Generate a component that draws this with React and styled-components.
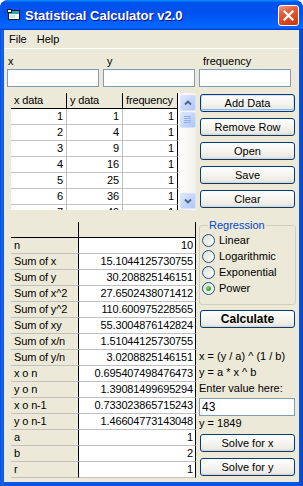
import React from 'react';
import styled, { createGlobalStyle } from 'styled-components';

const Global = createGlobalStyle`
  html, body { margin: 0; padding: 0; background: #ffffff; }
  body { font-family: "Liberation Sans", Arial, sans-serif; font-size: 11px; color: #000; }
  * { box-sizing: border-box; }
`;

const Window = styled.div`
  width: 303px;
  height: 486px;
  display: flex;
  flex-direction: column;
  border-radius: 8px 8px 0 0;
  overflow: hidden;
  background: #0a55e4;
`;

const TitleBar = styled.div`
  height: 30px;
  flex: none;
  display: flex;
  align-items: center;
  padding: 0 4px 0 7px;
  background: linear-gradient(180deg, #0997ff, #0053ee 8%, #0050ee 40%, #0066ff 88%, #0066ff 93%, #005bff 95%, #003dd7 96%, #003dd7);
`;

const TitleText = styled.div`
  flex: 1;
  margin-left: 4px;
  font-family: "Liberation Sans", Arial, sans-serif;
  font-weight: bold;
  font-size: 13px;
  color: #fff;
  text-shadow: 1px 1px 0 #0f1089;
  padding-top: 1px;
`;

const CloseButton = styled.div`
  width: 21px;
  height: 21px;
  border: 1px solid #fff;
  border-radius: 3px;
  background: linear-gradient(160deg, #f19d85 0%, #e4633f 30%, #d8461f 70%, #c9360e 100%);
  display: flex;
  align-items: center;
  justify-content: center;
  margin-top: 1px;
`;

const Frame = styled.div`
  flex: 1;
  display: flex;
  padding: 0 4px 4px 4px;
  background: linear-gradient(90deg, #0a4fd8 0, #1766ee 2px, #0a55e4 4px, #0a55e4 calc(100% - 4px), #0845c8 100%);
`;

const Client = styled.div`
  flex: 1;
  background: #ece9d8;
  display: flex;
  flex-direction: column;
`;

const MenuBar = styled.div`
  height: 19px;
  display: flex;
  align-items: center;
  border-bottom: 1px solid #ffffff;
`;

const MenuItem = styled.div`
  padding: 0 5px;
  line-height: 18px;
`;

const TopFields = styled.div`
  display: grid;
  grid-template-columns: repeat(3, 92px);
  column-gap: 4px;
  row-gap: 1px;
  padding: 5px 0 0 3px;
`;

const FieldLabel = styled.div`
  height: 14px;
  line-height: 14px;
  padding-left: ${p => p.$indent}px;
`;

const TextBox = styled.div`
  height: 18px;
  border: 1px solid #7f9db9;
  background: #fff;
  padding-left: 2px;
  font-size: 12px;
  line-height: 16px;
`;

const Main = styled.div`
  display: flex;
  gap: 3px;
  padding: 6px 0 0 7px;
`;

const LeftCol = styled.div`
  width: 185px;
  display: flex;
  flex-direction: column;
  gap: 12px;
`;

const RightCol = styled.div`
  width: 96px;
  display: flex;
  flex-direction: column;
`;

const DataFrame = styled.div`
  height: 117px;
  display: flex;
  background: #fff;
`;

const DataCells = styled.div`
  width: 167px;
  display: grid;
  grid-template-columns: 56px 56px 55px;
  grid-auto-rows: 16px;
  align-content: start;
  overflow: hidden;
`;

const Cell = styled.div`
  border-bottom: 1px solid ${p => (p.$head ? '#000' : '#c0c0c0')};
  border-right: 1px solid ${p => (p.$head || p.$edge ? '#000' : '#c0c0c0')};
  background: ${p => (p.$fixed ? '#ece9d8' : '#fff')};
  text-align: ${p => (p.$num ? 'right' : 'left')};
  padding: ${p => (p.$num ? '0 3px 0 0' : '0 0 0 3px')};
  line-height: 15px;
  white-space: nowrap;
  overflow: hidden;
  letter-spacing: -0.15px;
`;

const ScrollTrack = styled.div`
  width: 18px;
  padding: 2px 0 1px 2px;
  display: flex;
  flex-direction: column;
  background: linear-gradient(90deg, #ffffff, #f3f1ec);
`;

const ScrollButton = styled.div`
  width: 16px;
  height: 16px;
  border: 1px solid #d6e2fb;
  border-radius: 2px;
  background: linear-gradient(135deg, #dde8fe 0%, #c6d6fb 50%, #b2c7f5 100%);
  display: flex;
  align-items: center;
  justify-content: center;
  margin-top: ${p => (p.$thumb ? '1px' : '0')};
  margin-bottom: ${p => (p.$thumb ? 'auto' : '0')};
`;

const StatsFrame = styled.div`
  display: grid;
  grid-template-columns: 68px 117px;
  grid-auto-rows: 16px;
  background: #fff;
`;

const StatCell = styled.div`
  background: ${p => (p.$fixed ? '#ece9d8' : '#fff')};
  border-bottom: 1px solid ${p => (p.$head ? '#000' : '#c0c0c0')};
  border-right: 1px solid #000;
  text-align: ${p => (p.$num ? 'right' : 'left')};
  padding: ${p => (p.$num ? '0 2px 0 0' : '0 0 0 3px')};
  line-height: 15px;
  white-space: nowrap;
  overflow: hidden;
  letter-spacing: -0.15px;
`;

const Button = styled.button`
  display: block;
  width: 95px;
  height: 18px;
  margin: ${p => p.$mt || 0}px 0 0 1px;
  padding: 0;
  border: 1px solid #003c74;
  border-radius: 3px;
  background: linear-gradient(180deg, #ffffff 0%, #f6f5f0 45%, #ecebe4 85%, #d8d2c6 100%);
  font-family: "Liberation Sans", Arial, sans-serif;
  font-size: ${p => (p.$bold ? '12px' : '11px')};
  font-weight: ${p => (p.$bold ? 'bold' : 'normal')};
  color: #000;
  line-height: 16px;
  box-shadow: ${p => (p.$default ? 'inset 0 0 0 1px #cfe0fa, inset 0 -1px 0 1px #91b3ec' : 'none')};
`;

const Group = styled.fieldset`
  margin: 11px 0 0 0;
  padding: 0 0 8px 2px;
  border: 1px solid #d0d0bf;
  border-radius: 3px;
  width: 97px;
`;

const Legend = styled.legend`
  color: #0046d5;
  padding: 0 1px;
  margin-left: 6px;
  line-height: 13px;
`;

const RadioRow = styled.div`
  height: 16px;
  display: flex;
  align-items: center;
  gap: 4px;
`;

const RadioCircle = styled.span`
  width: 13px;
  height: 13px;
  border-radius: 50%;
  border: 1px solid #1c5180;
  background: linear-gradient(135deg, #dcdcd4 0%, #f4f4f0 60%, #ffffff 100%);
  display: flex;
  align-items: center;
  justify-content: center;
  &::after {
    content: '';
    display: ${p => (p.$checked ? 'block' : 'none')};
    width: 5px;
    height: 5px;
    border-radius: 50%;
    background: radial-gradient(circle at 35% 35%, #7be07b, #21a121 70%);
  }
`;

const InfoLine = styled.div`
  height: ${p => p.$h || 16}px;
  line-height: ${p => p.$h || 16}px;
  white-space: nowrap;
`;

const ValueBox = styled(TextBox)`
  width: 96px;
  margin-top: 2px;
`;

const dataRows = [
  [1, 1, 1], [2, 4, 1], [3, 9, 1], [4, 16, 1], [5, 25, 1], [6, 36, 1], [7, 49, 1],
];

const stats = [
  ['n', '10'],
  ['Sum of x', '15.1044125730755'],
  ['Sum of y', '30.208825146151'],
  ['Sum of x^2', '27.6502438071412'],
  ['Sum of y^2', '110.600975228565'],
  ['Sum of xy', '55.3004876142824'],
  ['Sum of x/n', '1.51044125730755'],
  ['Sum of y/n', '3.0208825146151'],
  ['x o n', '0.695407498476473'],
  ['y o n', '1.39081499695294'],
  ['x o n-1', '0.733023865715243'],
  ['y o n-1', '1.46604773143048'],
  ['a', '1'],
  ['b', '2'],
  ['r', '1'],
];

const AppIcon = () => (
  <svg width="14" height="14" viewBox="0 0 14 14">
    <rect x="1.5" y="2.5" width="11" height="9" fill="#ffffff" stroke="#1a1a1a" />
    <rect x="2" y="3" width="10" height="3" fill="#2aa6b8" />
    <rect x="3" y="7" width="5" height="3" fill="#bfeaf0" />
    <rect x="0.5" y="1.5" width="4" height="3" fill="#ffffff" stroke="#1a1a1a" />
  </svg>
);

const CloseIcon = () => (
  <svg width="11" height="11" viewBox="0 0 11 11">
    <path d="M1.5 1.5 L9.5 9.5 M9.5 1.5 L1.5 9.5" stroke="#fff" strokeWidth="2.2" strokeLinecap="square" />
  </svg>
);

const Chevron = ({ up }) => (
  <svg width="8" height="6" viewBox="0 0 8 6">
    <path d={up ? 'M1 4.5 L4 1.5 L7 4.5' : 'M1 1.5 L4 4.5 L7 1.5'} fill="none" stroke="#4d6185" strokeWidth="1.8" />
  </svg>
);

const Grip = () => (
  <svg width="8" height="8" viewBox="0 0 8 8">
    {[0.5, 2.5, 4.5, 6.5].map(y => (
      <path key={y} d={`M0 ${y} H7`} stroke="#8eaef0" strokeWidth="1" />
    ))}
  </svg>
);

export default function App() {
  return (
    <>
      <Global />
      <Window>
        <TitleBar>
          <AppIcon />
          <TitleText>Statistical Calculator v2.0</TitleText>
          <CloseButton><CloseIcon /></CloseButton>
        </TitleBar>
        <Frame>
          <Client>
            <MenuBar>
              <MenuItem>File</MenuItem>
              <MenuItem>Help</MenuItem>
            </MenuBar>
            <TopFields>
              <FieldLabel $indent={1}>x</FieldLabel>
              <FieldLabel $indent={4}>y</FieldLabel>
              <FieldLabel $indent={4}>frequency</FieldLabel>
              <TextBox />
              <TextBox />
              <TextBox />
            </TopFields>
            <Main>
              <LeftCol>
                <DataFrame>
                  <DataCells>
                    <Cell $head $fixed>x data</Cell>
                    <Cell $head $fixed>y data</Cell>
                    <Cell $head $fixed>frequency</Cell>
                    {dataRows.map((r, i) => (
                      <React.Fragment key={i}>
                        <Cell $num>{r[0]}</Cell>
                        <Cell $num>{r[1]}</Cell>
                        <Cell $num $edge>{r[2]}</Cell>
                      </React.Fragment>
                    ))}
                  </DataCells>
                  <ScrollTrack>
                    <ScrollButton><Chevron up /></ScrollButton>
                    <ScrollButton $thumb><Grip /></ScrollButton>
                    <ScrollButton><Chevron /></ScrollButton>
                  </ScrollTrack>
                </DataFrame>
                <StatsFrame>
                  <StatCell $fixed $head />
                  <StatCell $fixed $head />
                  {stats.map(([k, v]) => (
                    <React.Fragment key={k}>
                      <StatCell $fixed>{k}</StatCell>
                      <StatCell $num>{v}</StatCell>
                    </React.Fragment>
                  ))}
                </StatsFrame>
              </LeftCol>
              <RightCol>
                <Button $default $mt={1}>Add Data</Button>
                <Button $mt={6}>Remove Row</Button>
                <Button $mt={6}>Open</Button>
                <Button $mt={6}>Save</Button>
                <Button $mt={6}>Clear</Button>
                <Group>
                  <Legend>Regression</Legend>
                  {['Linear', 'Logarithmic', 'Exponential', 'Power'].map(n => (
                    <RadioRow key={n}>
                      <RadioCircle $checked={n === 'Power'} />
                      <span>{n}</span>
                    </RadioRow>
                  ))}
                </Group>
                <Button $bold $mt={5}>Calculate</Button>
                <InfoLine style={{ marginTop: 20 }}>x = (y / a) ^ (1 / b)</InfoLine>
                <InfoLine>y = a * x ^ b</InfoLine>
                <InfoLine>Enter value here:</InfoLine>
                <ValueBox>43</ValueBox>
                <InfoLine $h={15}>y = 1849</InfoLine>
                <Button $mt={3}>Solve for x</Button>
                <Button $mt={6}>Solve for y</Button>
              </RightCol>
            </Main>
          </Client>
        </Frame>
      </Window>
    </>
  );
}
